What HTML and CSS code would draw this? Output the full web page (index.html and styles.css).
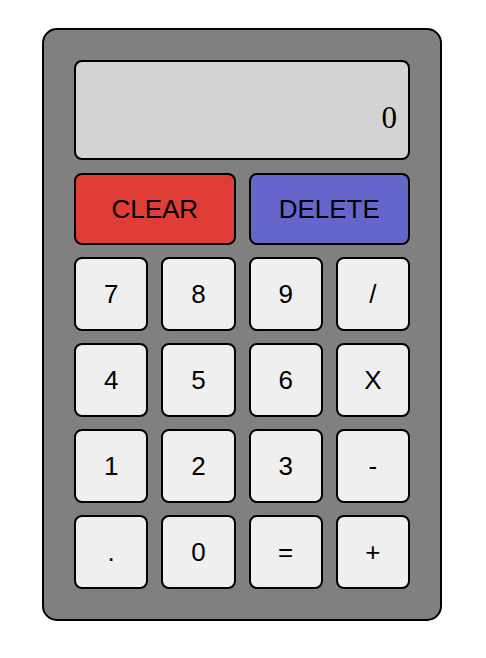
FILE: index.html
```html
<!DOCTYPE html>
<html>
<head>
<meta charset="utf-8">
<link rel="stylesheet" href="styles.css">
</head>
<body>
<div class="calc">
  <div class="display">0</div>
  <div class="keys">
    <button class="key wide clear">CLEAR</button>
    <button class="key wide delete">DELETE</button>
    <button class="key">7</button>
    <button class="key">8</button>
    <button class="key">9</button>
    <button class="key">/</button>
    <button class="key">4</button>
    <button class="key">5</button>
    <button class="key">6</button>
    <button class="key">X</button>
    <button class="key">1</button>
    <button class="key">2</button>
    <button class="key">3</button>
    <button class="key">-</button>
    <button class="key">.</button>
    <button class="key">0</button>
    <button class="key">=</button>
    <button class="key">+</button>
  </div>
</div>
</body>
</html>
```
FILE: styles.css
```css
html, body {
  margin: 0;
  padding: 0;
  background: #ffffff;
}
body {
  padding: 28px 2px 0 0;
}
.calc {
  box-sizing: border-box;
  width: 400px;
  margin: 0 auto;
  padding: 30px;
  background: #808080;
  border: 2px solid #000;
  border-radius: 15px;
}
.display {
  box-sizing: border-box;
  height: 100px;
  background: #d3d3d3;
  border: 2px solid #000;
  border-radius: 8px;
  display: flex;
  justify-content: flex-end;
  align-items: flex-end;
  padding: 0 11px 25px 0;
  font-family: "Liberation Serif", serif;
  font-size: 31px;
  line-height: 1;
  color: #000;
}
.keys {
  margin-top: 13px;
  display: grid;
  grid-template-columns: repeat(4, 1fr);
  grid-template-rows: 72px repeat(4, 74px);
  column-gap: 13px;
  row-gap: 12px;
}
.key {
  box-sizing: border-box;
  margin: 0;
  padding: 0;
  background: #efefef;
  border: 2px solid #000;
  border-radius: 8px;
  font-family: "Liberation Sans", Arial, sans-serif;
  font-size: 26px;
  color: #000;
}
.wide {
  grid-column: span 2;
}
.clear {
  background: #e03d36;
}
.delete {
  background: #6466cc;
}
```
